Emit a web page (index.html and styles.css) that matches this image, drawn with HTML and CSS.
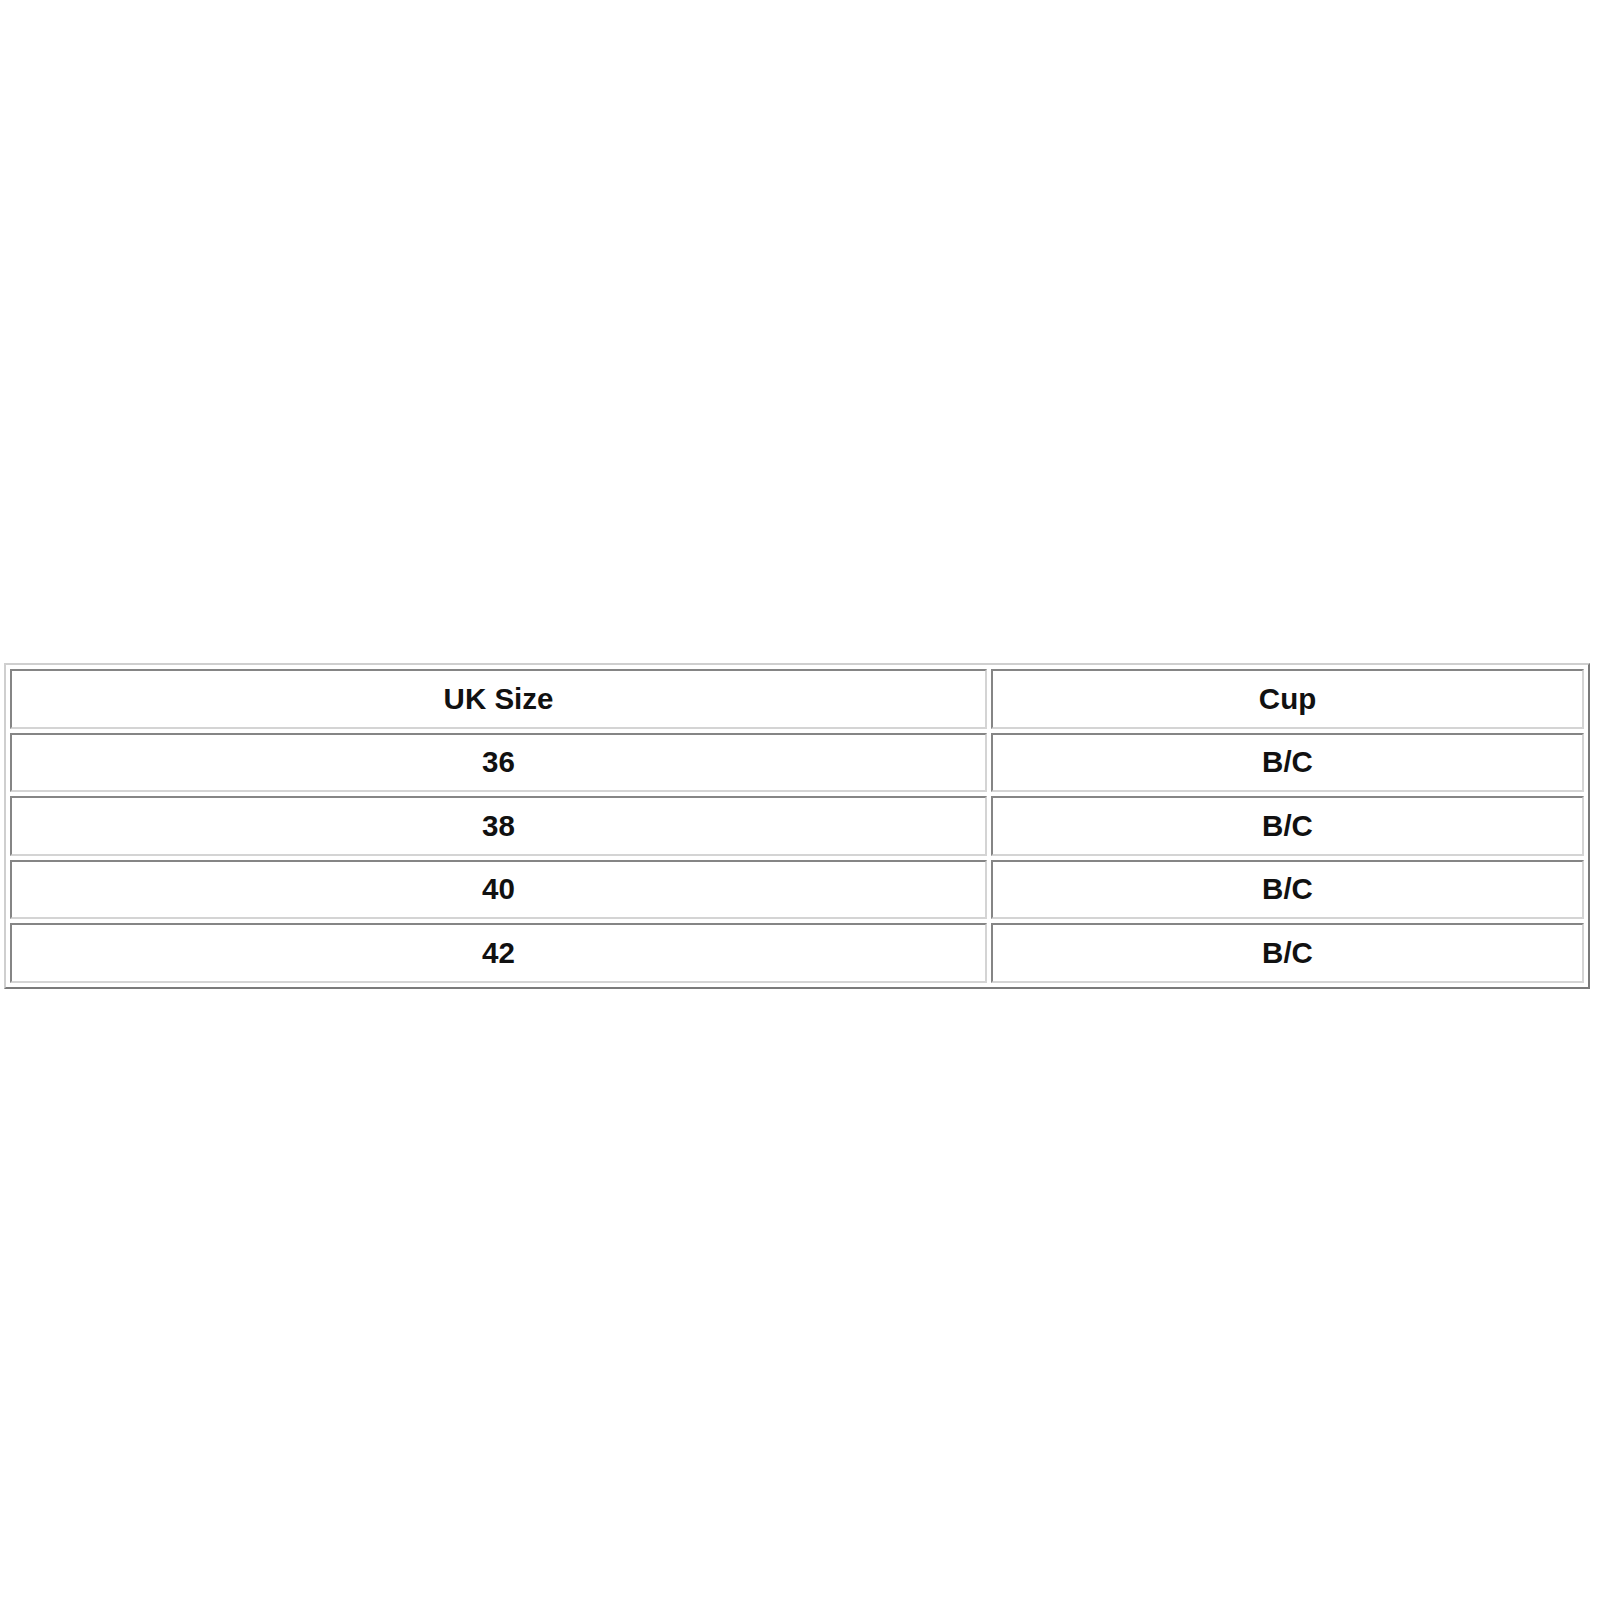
FILE: index.html
```html
<!DOCTYPE html>
<html>
<head>
<meta charset="utf-8">
<link rel="stylesheet" href="styles.css">
</head>
<body>
<div class="page">
  <table class="size-table">
    <tr><td class="c1">UK Size</td><td class="c2">Cup</td></tr>
    <tr><td class="c1">36</td><td class="c2">B/C</td></tr>
    <tr><td class="c1">38</td><td class="c2">B/C</td></tr>
    <tr><td class="c1">40</td><td class="c2">B/C</td></tr>
    <tr><td class="c1">42</td><td class="c2">B/C</td></tr>
  </table>
</div>
</body>
</html>
```
FILE: styles.css
```css
html, body {
  margin: 0;
  padding: 0;
  background: #ffffff;
}
.page {
  padding: 663px 10px 0 4px;
}
.size-table {
  width: 1586px;
  border-collapse: separate;
  border-spacing: 4px 4px;
  border-style: solid;
  border-width: 2px;
  border-color: #cfcfcf #7a7a7a #7a7a7a #cfcfcf;
  table-layout: fixed;
  font-family: "Liberation Sans", Arial, sans-serif;
  font-weight: bold;
  font-size: 29.5px;
  color: #111111;
}
.size-table td {
  height: 55.5px;
  padding: 0;
  text-align: center;
  vertical-align: middle;
  border-style: solid;
  border-width: 2px;
  border-color: #858585 #d4d4d4 #d4d4d4 #858585;
}
.c1 {
  width: 973px;
}
.c2 {
  width: auto;
}
```
